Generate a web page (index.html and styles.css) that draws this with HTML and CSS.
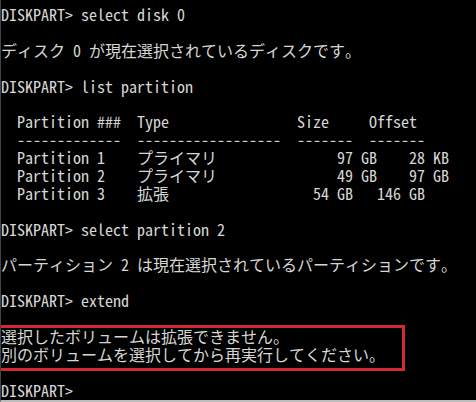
FILE: index.html
```html
<!DOCTYPE html>
<html lang="ja">
<head>
<meta charset="utf-8">
<title>DISKPART</title>
<link rel="stylesheet" href="styles.css">
</head>
<body>
<main class="term">
<div class="l">DISKPART&gt; select disk 0</div>
<div class="l"></div>
<div class="l">ディスク 0 が現在選択されているディスクです。</div>
<div class="l"></div>
<div class="l">DISKPART&gt; list partition</div>
<div class="l"></div>
<div class="l">  Partition ###  Type                Size     Offset</div>
<div class="l">  -------------  ------------------  -------  -------</div>
<div class="l">  Partition 1    プライマリ               97 GB    28 KB</div>
<div class="l">  Partition 2    プライマリ               49 GB    97 GB</div>
<div class="l">  Partition 3    拡張                  54 GB   146 GB</div>
<div class="l"></div>
<div class="l">DISKPART&gt; select partition 2</div>
<div class="l"></div>
<div class="l">パーティション 2 は現在選択されているパーティションです。</div>
<div class="l"></div>
<div class="l">DISKPART&gt; extend</div>
<div class="l"></div>
<div class="err">
<div class="l">選択したボリュームは拡張できません。</div>
<div class="l">別のボリュームを選択してから再実行してください。</div>
</div>
<div class="l"></div>
<div class="l">DISKPART&gt;</div>
</main>
</body>
</html>
```

FILE: styles.css
```css
html, body {
  margin: 0;
  padding: 0;
  background: #000;
}

.term {
  box-sizing: border-box;
  width: 476px;
  height: 402px;
  padding-top: 6px;
  border-left: 1px solid #454545;
  border-bottom: 2px solid #bcbcbc;
  background: #000;
  color: #d6d6d6;
  font-family: "Noto Sans Mono CJK JP", "DejaVu Sans Mono", monospace;
  font-size: 16px;
  overflow: hidden;
}

.l {
  height: 17.9px;
  line-height: 17.9px;
  white-space: pre;
}

.err {
  position: relative;
}

.err::before {
  content: "";
  position: absolute;
  box-sizing: border-box;
  left: -3px;
  top: -3px;
  bottom: -7px;
  width: 407px;
  border: 3px solid #d12a31;
}
```
